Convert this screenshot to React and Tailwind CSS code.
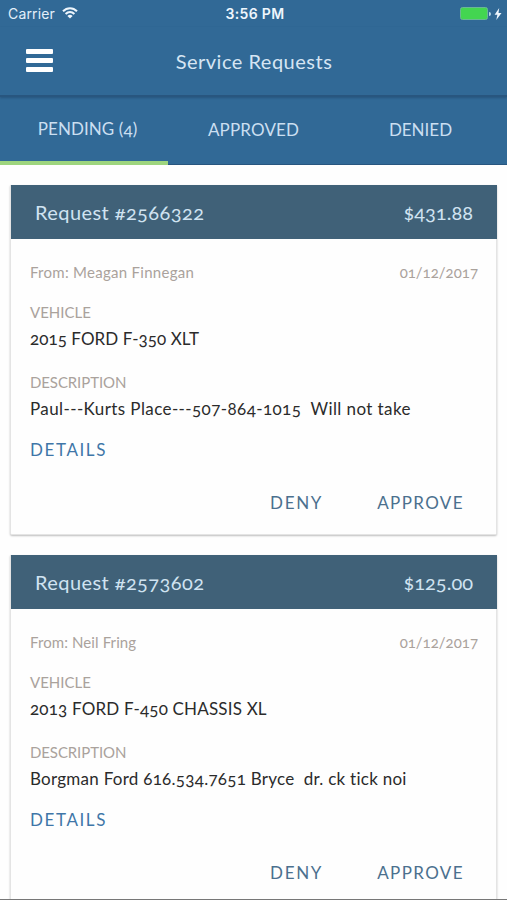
const requests = [
  {
    id: "2566322",
    amount: "$431.88",
    from: "Meagan Finnegan",
    fromSpacing: "tracking-[0.28px]",
    date: "01/12/2017",
    vehicle: "2015 FORD F-350 XLT",
    vehicleSpacing: "tracking-[0.06px]",
    description: "Paul---Kurts Place---507-864-1015  Will not take",
    descriptionSpacing: "tracking-[0.4px]",
  },
  {
    id: "2573602",
    amount: "$125.00",
    from: "Neil Fring",
    fromSpacing: "tracking-[0.1px]",
    date: "01/12/2017",
    vehicle: "2013 FORD F-450 CHASSIS XL",
    vehicleSpacing: "tracking-[0.18px]",
    description: "Borgman Ford 616.534.7651 Bryce  dr. ck tick noi",
    descriptionSpacing: "tracking-[0.26px]",
  },
];

function StatusBar() {
  return (
    <div className="grid h-[27px] grid-cols-3 items-center pl-[8px] pr-[5px] font-['Inter',sans-serif] text-[#e3effa]">
      <div className="flex items-center gap-[7px]">
        <span className="text-[14px] tracking-[0.15px]">Carrier</span>
        <svg className="-mt-[2px]" width="16" height="12" viewBox="0 0 16 12" fill="none" stroke="#eef6fd" strokeWidth="2">
          <path d="M1 4.3C5 .2 11 .2 15 4.3" />
          <path d="M3.6 7C6.2 4.4 9.8 4.4 12.4 7" />
          <path d="M8 11.5 5.4 8.9Q8 6.7 10.6 8.9Z" fill="#eef6fd" stroke="none" />
        </svg>
      </div>
      <span className="text-center text-[14px] font-semibold tracking-[0.35px] text-[#eef6fd]">3:56 PM</span>
      <div className="flex items-center justify-end">
        <span className="h-[13px] w-[28px] rounded-[2.5px] border border-[#69b795] bg-[#43d551]" />
        <span className="ml-px h-[4px] w-[2px] rounded-r-full bg-[#b9d6e6]" />
        <svg className="ml-[3px]" width="8" height="12" viewBox="0 0 8 12" fill="#eef6fd">
          <path d="M5.2 0 .6 6.7h2.8L2.3 12 7.5 4.9H4.5Z" />
        </svg>
      </div>
    </div>
  );
}

function Header() {
  return (
    <div className="flex h-[70px] items-center border-b-2 border-[#28567f] px-[26px] shadow-[0_1px_2px_rgba(20,50,80,0.35)]">
      <button className="-mt-[2px] flex w-[27px] flex-col gap-[4px]" aria-label="Menu">
        <span className="h-[5px] rounded-[1px] bg-white" />
        <span className="h-[5px] rounded-[1px] bg-white" />
        <span className="h-[5px] rounded-[1px] bg-white" />
      </button>
      <h1 className="-mt-px flex-1 pr-[26px] text-center text-[20px] tracking-[0.5px] text-[#d6e5f3]">Service Requests</h1>
    </div>
  );
}

function Tabs() {
  return (
    <div className="grid h-[68px] grid-cols-[168px_171px_168px] text-center text-[17px] leading-[64px] text-[#cbdff1] oldstyle-nums">
      <div className="border-b-4 border-[#9ed57e] pl-[7px] tracking-[0.08px]">PENDING (4)</div>
      <div className="border-b border-[#28567f] pt-px tracking-[0.15px]">APPROVED</div>
      <div className="border-b border-[#28567f] pr-[5px] pt-px">DENIED</div>
    </div>
  );
}

function RequestCard({ request }) {
  return (
    <section className="mx-[10px] h-[350px] shrink-0 rounded-b-[2px] border-x border-b border-[#e4e4e4] bg-[#fefefe] shadow-[0_1px_2px_rgba(0,0,0,0.25)]">
      <div className="-mr-px flex h-[54px] items-center justify-between bg-[#406178] px-[24px] text-[20px] leading-[54px] text-[#d0e3f1]">
        <span className="tracking-[0.42px]">Request #{request.id}</span>
        <span>{request.amount}</span>
      </div>
      <div className="pl-[19px] pr-[18px] pt-[21px]">
        <div className="flex justify-between text-[15px] leading-[24px] text-[#aaa29c]">
          <span className={request.fromSpacing}>From: {request.from}</span>
          <span>{request.date}</span>
        </div>
        <div className="mt-[16px] text-[15px] leading-[24px] text-[#aaa29c]">VEHICLE</div>
        <div className={`mt-[3px] whitespace-pre text-[17px] leading-[24px] text-[#2b2b2b] ${request.vehicleSpacing}`}>{request.vehicle}</div>
        <div className="mt-[19px] text-[15px] leading-[24px] tracking-[-0.1px] text-[#aaa29c]">DESCRIPTION</div>
        <div className={`mt-[3px] whitespace-pre text-[17px] leading-[24px] text-[#2b2b2b] ${request.descriptionSpacing}`}>{request.description}</div>
        <div className="mt-[17px] text-[17px] leading-[24px] tracking-[1.6px] text-[#3f76a8]">DETAILS</div>
        <div className="mt-[29px] flex justify-end gap-[54px] pr-[14px] text-[17px] leading-[24px] text-[#4b708e]">
          <span className="tracking-[1.7px]">DENY</span>
          <span className="tracking-[1.4px]">APPROVE</span>
        </div>
      </div>
    </section>
  );
}

export default function App() {
  return (
    <div className="flex h-[900px] w-[507px] flex-col overflow-hidden border-b border-[#777] bg-[#fefefe] font-['Lato','Open_Sans',sans-serif]">
      <header className="shrink-0 bg-[#316996]">
        <StatusBar />
        <Header />
        <Tabs />
      </header>
      <main className="flex min-h-0 flex-1 flex-col gap-[20px] overflow-hidden pt-[20px] oldstyle-nums">
        {requests.map((request) => (
          <RequestCard key={request.id} request={request} />
        ))}
      </main>
    </div>
  );
}
